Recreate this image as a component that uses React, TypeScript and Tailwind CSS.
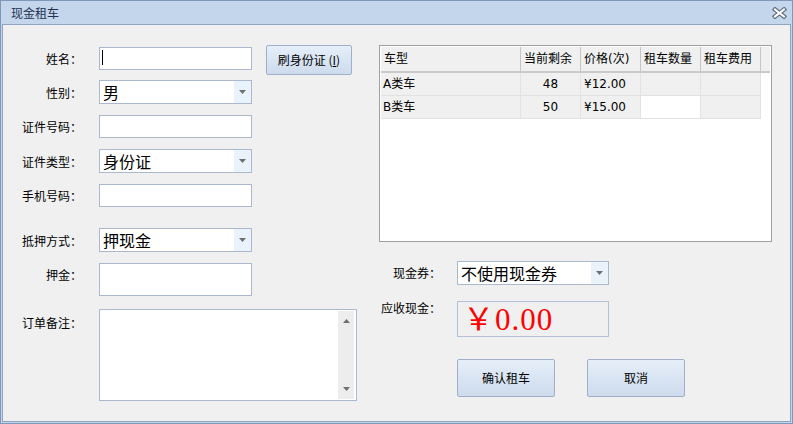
import type { ReactNode } from 'react'

const rows = [
  { name: 'A类车', left: 48, price: '¥12.00', qtyWhite: false },
  { name: 'B类车', left: 50, price: '¥15.00', qtyWhite: true },
]

function Arrow({ up }: { up?: boolean }) {
  return (
    <svg width="7" height="4" viewBox="0 0 7 4">
      <path d={up ? 'M0 4 L3.5 0 L7 4 Z' : 'M0 0 L7 0 L3.5 4 Z'} fill="#707070" />
    </svg>
  )
}

function Label({ children }: { children: ReactNode }) {
  return <div className="w-[79px] shrink-0 text-right h-[23px] leading-[23px] text-[12px] text-black">{children}</div>
}

function TextBox({ tall }: { tall?: boolean }) {
  return (
    <div className={tall ? 'ml-[17px] w-[153px] h-[33px] border border-[#abb9cf] bg-white' : 'ml-[17px] w-[153px] h-[23px] border border-[#abb9cf] bg-white'} />
  )
}

function Combo({ value, wide }: { value: string; wide?: boolean }) {
  return (
    <div className={wide ? 'w-[152px] h-[24px] border border-[#abb9cf] bg-white flex' : 'ml-[17px] w-[153px] h-[24px] border border-[#abb9cf] bg-white flex'}>
      <div className="flex-1 pl-[3px] text-[16px] leading-[22px] text-black">{value}</div>
      <div className="w-[17px] bg-[#eaf2fb] flex items-center justify-center">
        <Arrow />
      </div>
    </div>
  )
}

function Btn({ children, className }: { children: ReactNode; className: string }) {
  return (
    <button className={`${className} rounded-[2px] border border-[#9fb0c8] bg-gradient-to-b from-[#e6eff9] to-[#cddbed] text-[12px] text-black flex items-center justify-center`}>
      {children}
    </button>
  )
}

export default function App() {
  return (
    <div className="w-[793px] h-[424px] flex flex-col bg-[#c4d6ec] border border-[#7f98b8] font-['Noto_Sans_CJK_SC',sans-serif] overflow-hidden">
      {/* title bar */}
      <div className="h-[23px] shrink-0 flex items-center justify-between pl-[10px] pr-[5px]">
        <span className="text-[12px] text-[#1e3150]">现金租车</span>
        <svg width="15" height="12" viewBox="0 0 15 12">
          <path d="M3 2.5 L12 9.5 M12 2.5 L3 9.5" stroke="#5f6f85" strokeWidth="4.4" strokeLinecap="square" />
          <path d="M3 2.5 L12 9.5 M12 2.5 L3 9.5" stroke="#ffffff" strokeWidth="2" strokeLinecap="square" />
        </svg>
      </div>

      <div className="flex-1 mx-px mb-px border border-[#8ea4c0] bg-[#f0f0f0] flex">
        {/* left form */}
        <div className="w-[376px] shrink-0 pt-[20px]">
          <div className="flex items-start h-[30px]">
            <div className="mt-[2px]"><Label>姓名：</Label></div>
            <div className="mt-[2px] ml-[17px] w-[153px] h-[23px] border border-[#abb9cf] bg-white pl-[2px] pt-[2px]">
              <div className="w-px h-[15px] bg-black" />
            </div>
            <Btn className="ml-[14px] w-[86px] h-[30px]">
              刷身份证 (<span className="underline">I</span>)
            </Btn>
          </div>
          <div className="flex items-center mt-[5px]">
            <Label>性别：</Label>
            <Combo value="男" />
          </div>
          <div className="flex items-center mt-[11px]">
            <Label>证件号码：</Label>
            <TextBox />
          </div>
          <div className="flex items-center mt-[11px]">
            <Label>证件类型：</Label>
            <Combo value="身份证" />
          </div>
          <div className="flex items-center mt-[11px]">
            <Label>手机号码：</Label>
            <TextBox />
          </div>
          <div className="flex items-center mt-[21px]">
            <Label>抵押方式：</Label>
            <Combo value="押现金" />
          </div>
          <div className="flex items-start mt-[11px]">
            <Label>押金：</Label>
            <TextBox tall />
          </div>
          <div className="flex items-start mt-[13px]">
            <div className="mt-[2px]"><Label>订单备注：</Label></div>
            <div className="ml-[17px] w-[258px] h-[92px] border border-[#abb9cf] bg-white flex justify-end p-px pr-[2px]">
              <div className="w-[16px] bg-[#ededed] flex flex-col items-center justify-between py-[8px]">
                <Arrow up />
                <Arrow />
              </div>
            </div>
          </div>
        </div>

        {/* right side */}
        <div className="w-[393px] shrink-0 pt-[20px]">
          <div className="h-[197px] border border-[#a0a0a0] bg-white p-px font-['DejaVu_Sans','Noto_Sans_CJK_SC',sans-serif] text-[12px] text-black">
            <div className="flex h-[26px] bg-[#f0f0f0] border-b-2 border-[#cacaca]">
              <div className="w-[140px] border-r border-[#c6c6c6] pl-[3px] leading-[24px]">车型</div>
              <div className="w-[60px] border-r border-[#c6c6c6] pl-[3px] leading-[24px]">当前剩余</div>
              <div className="w-[60px] border-r border-[#c6c6c6] pl-[3px] leading-[24px]">价格(次)</div>
              <div className="w-[60px] border-r border-[#c6c6c6] pl-[3px] leading-[24px]">租车数量</div>
              <div className="w-[60px] border-r border-[#c6c6c6] pl-[3px] leading-[24px]">租车费用</div>
              <div className="flex-1" />
            </div>
            {rows.map(r => (
              <div key={r.name} className="flex w-[380px] h-[23px] border-b border-[#e2e2e2] leading-[22px]">
                <div className="w-[140px] bg-[#f0f0f0] border-r border-[#e2e2e2] pl-[2px]">{r.name}</div>
                <div className="w-[60px] bg-[#f0f0f0] border-r border-[#e2e2e2] text-center">{r.left}</div>
                <div className="w-[60px] bg-[#f0f0f0] border-r border-[#e2e2e2] pl-[3px]">{r.price}</div>
                <div className={r.qtyWhite ? 'w-[60px] bg-white border-r border-[#e2e2e2]' : 'w-[60px] bg-[#f0f0f0] border-r border-[#e2e2e2]'} />
                <div className="w-[60px] bg-[#f0f0f0] border-r border-[#e2e2e2]" />
              </div>
            ))}
          </div>

          <div className="flex items-center mt-[19px]">
            <div className="w-[62px] text-right text-[12px] text-black">现金券：</div>
            <div className="ml-[16px]">
              <Combo value="不使用现金券" wide />
            </div>
          </div>

          <div className="flex items-start mt-[16px]">
            <div className="w-[62px] text-right text-[12px] leading-[14px] text-black">应收现金：</div>
            <div className="ml-[16px] w-[152px] h-[36px] border border-[#b4c0d3] bg-[#f0f0f0] pl-[5px] flex items-center text-[31px] leading-none tracking-[1px] text-[#ff0000] font-['Liberation_Serif','Noto_Sans_CJK_SC',serif]">
              ￥0.00
            </div>
          </div>

          <div className="flex mt-[22px] pl-[78px] gap-[32px]">
            <Btn className="w-[98px] h-[38px]">确认租车</Btn>
            <Btn className="w-[98px] h-[38px]">取消</Btn>
          </div>
        </div>
      </div>
    </div>
  )
}
